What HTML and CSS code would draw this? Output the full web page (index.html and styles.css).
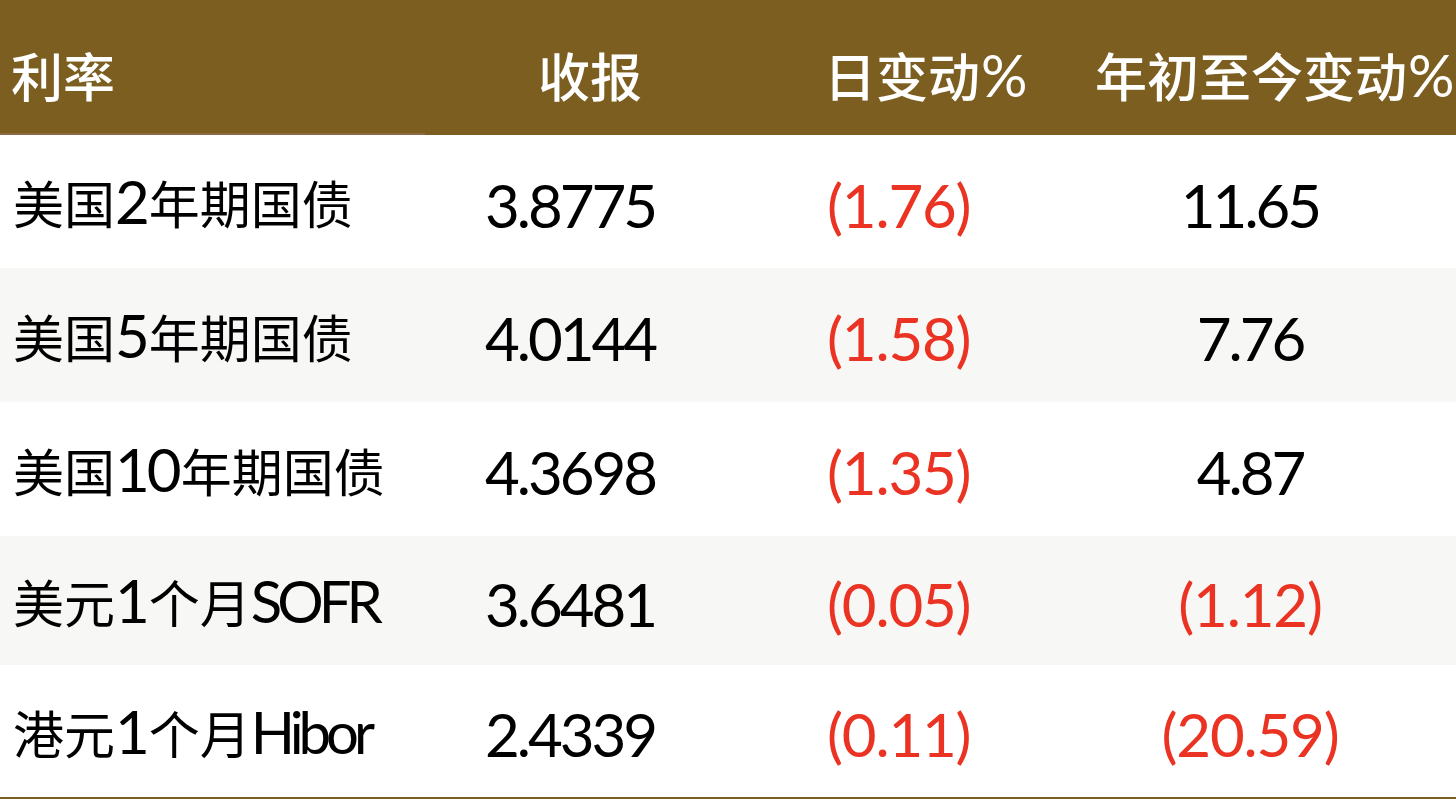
FILE: index.html
```html
<!DOCTYPE html>
<html lang="zh-CN">
<head>
<meta charset="utf-8">
<title>利率</title>
<link rel="stylesheet" href="styles.css">
</head>
<body>
<div class="table">
  <div class="row head">
    <div class="cell c1"><span class="first">利率</span></div>
    <div class="cell c2">收报</div>
    <div class="cell c3">日变动<span class="pct">%</span></div>
    <div class="cell c4">年初至今变动<span class="pct">%</span></div>
  </div>
  <div class="row r1">
    <div class="cell c1">美国<span class="lat">2</span>年期国债</div>
    <div class="cell c2 num">3.8775</div>
    <div class="cell c3 num neg">(1.76)</div>
    <div class="cell c4 num">11.65</div>
  </div>
  <div class="row r2 alt">
    <div class="cell c1">美国<span class="lat">5</span>年期国债</div>
    <div class="cell c2 num">4.0144</div>
    <div class="cell c3 num neg">(1.58)</div>
    <div class="cell c4 num">7.76</div>
  </div>
  <div class="row r3">
    <div class="cell c1">美国<span class="lat">10</span>年期国债</div>
    <div class="cell c2 num">4.3698</div>
    <div class="cell c3 num neg">(1.35)</div>
    <div class="cell c4 num">4.87</div>
  </div>
  <div class="row r4 alt">
    <div class="cell c1">美元<span class="lat">1</span>个月<span class="lat word">SOFR</span></div>
    <div class="cell c2 num">3.6481</div>
    <div class="cell c3 num neg">(0.05)</div>
    <div class="cell c4 num neg">(1.12)</div>
  </div>
  <div class="row r5">
    <div class="cell c1">港元<span class="lat">1</span>个月<span class="lat word">Hibor</span></div>
    <div class="cell c2 num">2.4339</div>
    <div class="cell c3 num neg">(0.11)</div>
    <div class="cell c4 num neg">(20.59)</div>
  </div>
</div>
</body>
</html>
```
FILE: styles.css
```css
html, body {
  margin: 0;
  padding: 0;
  background: #ffffff;
  overflow: hidden;
}
body {
  width: 1456px;
  height: 804px;
  font-family: "Noto Sans CJK SC", "Noto Sans", sans-serif;
  color: #000;
}
.table {
  width: 1456px;
  border-bottom: 2px solid #7b5e20;
}
.row {
  display: grid;
  grid-template-columns: 425px 355px 264px 412px;
  align-items: center;
}
.cell {
  white-space: nowrap;
  font-size: 51px;
  line-height: 60px;
}
.head {
  height: 135px;
  background: #7b5e20;
  color: #ffffff;
  font-weight: 500;
  align-items: stretch;
}
.head .cell {
  font-size: 52px;
  display: flex;
  align-items: center;
  padding-top: 14px;
  box-sizing: border-box;
}
.head .c1 {
  padding-left: 11px;
  box-shadow: inset 0 -2px 0 #8d6844;
}
.head .c2 { padding-left: 113px; }
.head .c3 { padding-left: 44px; }
.head .c4 { padding-left: 51px; overflow: visible; }
.pct {
  font-family: "Lato", sans-serif;
  font-weight: 400;
  font-size: 58px;
  margin-left: 1px;
}
.r1 { height: 133px; }
.r2 { height: 134px; }
.r3 { height: 134px; }
.r4 { height: 129px; }
.r5 { height: 132px; }
.alt { background: #f7f7f5; }
.c1 { padding-left: 13px; }
.lat {
  font-family: "Lato", sans-serif;
  font-size: 60px;
  letter-spacing: -3px;
  margin-right: 2px;
}
.lat.word {
  letter-spacing: -5px;
  font-size: 58px;
}
.num {
  font-family: "Lato", sans-serif;
  font-size: 60px;
  letter-spacing: -3px;
  padding-top: 6px;
}
.c2.num { padding-left: 60px; }
.c3.num { padding-left: 47px; }
.c4.num { text-align: center; }
.neg {
  color: #ea3323;
  letter-spacing: -1.2px;
}
```
